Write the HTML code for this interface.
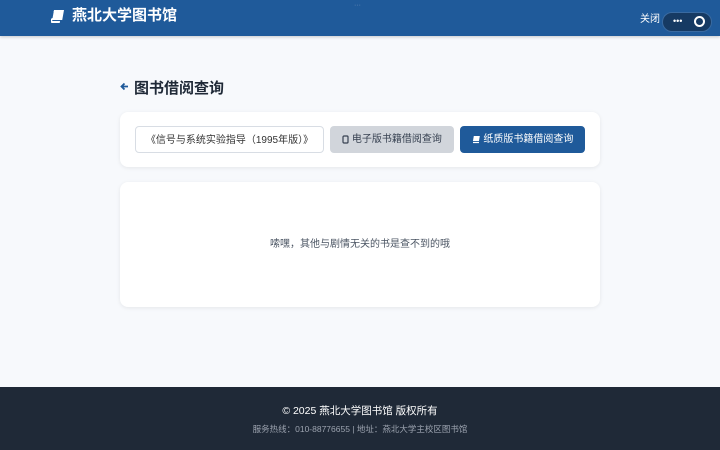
<!DOCTYPE html>
<html><head><meta charset="utf-8"><style>
*{margin:0;padding:0;box-sizing:border-box}
body{width:720px;height:450px;background:#f7f9fc;font-family:"Liberation Sans","Noto Sans CJK SC",sans-serif;position:relative;overflow:hidden}
.hdr{position:absolute;left:0;top:0;width:720px;height:36px;background:#1f5a9a;box-shadow:0 1px 3px rgba(0,0,0,.2)}
.logo{position:absolute;left:72px;top:6px;color:#fff;font-size:15px;font-weight:bold;line-height:20px}
.close{position:absolute;left:640px;top:10px;color:#fff;font-size:10px}
.pill{position:absolute;left:662px;top:12px;width:50px;height:20px;border-radius:10px;background:#163a63;border:1px solid #3a6aa0}
.title{position:absolute;left:134px;top:77px;font-size:15px;font-weight:bold;color:#1f2937}
.card{position:absolute;left:120px;background:#fff;border-radius:8px;box-shadow:0 1px 4px rgba(0,0,0,.08)}
.b{position:absolute;top:126px;height:27px;border-radius:4px;font-size:10px;line-height:27px;text-align:center}
.ft{position:absolute;left:0;top:387px;width:720px;height:63px;background:#1f2937;text-align:center}
svg{vertical-align:middle}
</style></head><body>
<div class="hdr">
<svg style="position:absolute;left:51px;top:10px" width="13" height="13" viewBox="0 0 13 13"><path d="M3 1h9v8H3.5a1.5 1.5 0 0 0 0 3H11" fill="none" stroke="#fff" stroke-width="2" transform="skewX(-10)"/><rect x="3" y="1" width="9" height="8" fill="#fff" transform="skewX(-10)"/></svg>
<div class="logo">燕北大学图书馆</div>
<div style="position:absolute;left:354px;top:2px;color:#6f8fb8;font-size:7px">···</div>
<div class="close">关闭 ✕</div>
<div class="pill"><span style="position:absolute;left:10px;top:3px;color:#fff;font-size:9px">•••</span><span style="position:absolute;left:31px;top:3px;width:11px;height:11px;border:2px solid #fff;border-radius:50%"></span></div>
</div>
<svg style="position:absolute;left:120px;top:82px" width="9" height="9" viewBox="0 0 9 9"><path d="M8 4.5H2M4.5 1.5L1.5 4.5l3 3" fill="none" stroke="#1f5a9a" stroke-width="1.8"/></svg>
<div class="title">图书借阅查询</div>
<div class="card" style="top:112px;width:480px;height:55px"></div>
<div class="b" style="left:135px;width:189px;border:1px solid #d8dde4;background:#fff;color:#333">《信号与系统实验指导（1995年版）》</div>
<div class="b" style="left:330px;width:124px;background:#d1d5db;color:#374151"><svg width="7" height="9" viewBox="0 0 7 9"><rect x="1" y="1" width="5" height="7" rx="1" fill="none" stroke="#374151" stroke-width="1.2"/></svg> 电子版书籍借阅查询</div>
<div class="b" style="left:460px;width:125px;background:#1f5a9a;color:#fff"><svg width="9" height="9" viewBox="0 0 9 9"><rect x="2" y="1" width="6" height="5" fill="#fff" transform="skewX(-10)"/><path d="M1 7.5h6" stroke="#fff" stroke-width="1.2"/></svg> 纸质版书籍借阅查询</div>
<div class="card" style="top:182px;width:480px;height:125px"><div style="text-align:center;line-height:125px;font-size:10px;color:#4b5563">嗦嘿，其他与剧情无关的书是查不到的哦</div></div>
<div class="ft">
<div style="color:#fff;font-size:10.5px;margin-top:16px">© 2025 燕北大学图书馆 版权所有</div>
<div style="color:#9ca3af;font-size:8.5px;margin-top:5px">服务热线：010-88776655 | 地址：燕北大学主校区图书馆</div>
</div>
</body></html>
